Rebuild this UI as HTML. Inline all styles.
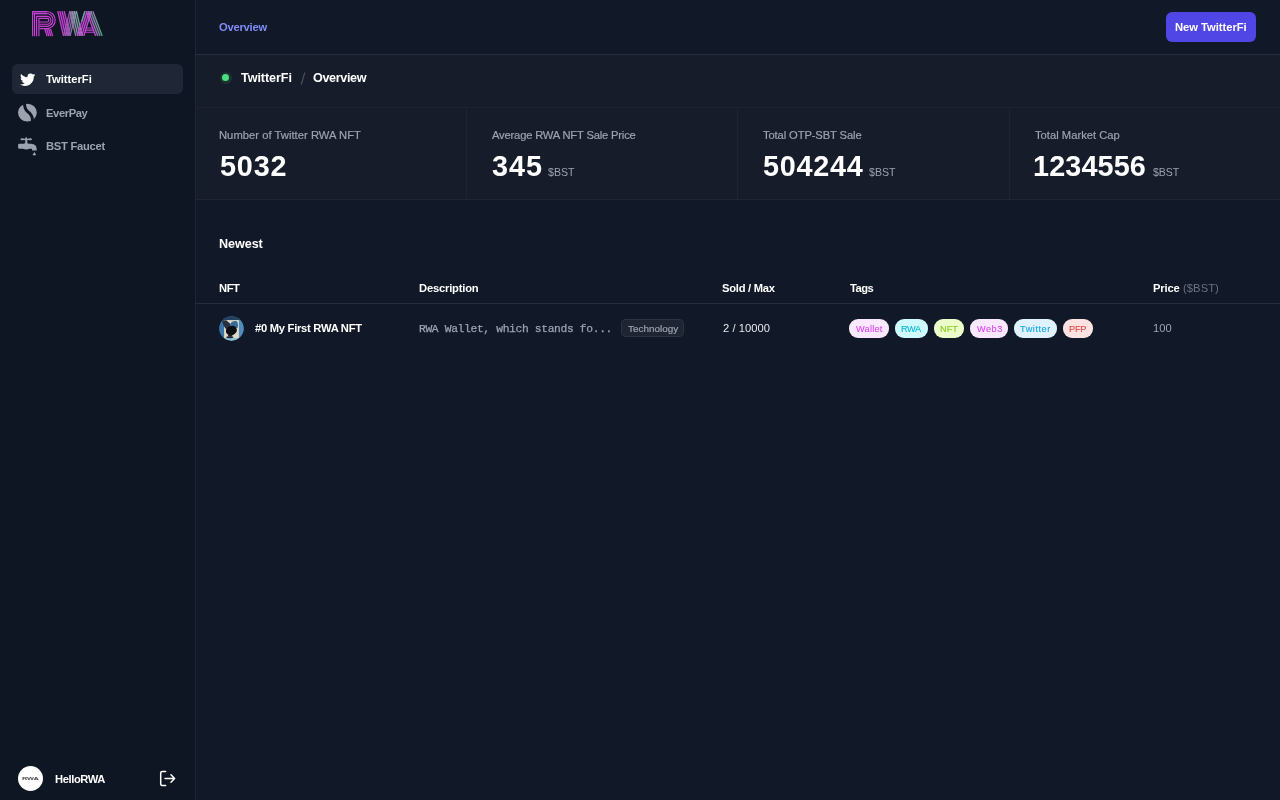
<!DOCTYPE html>
<html><head><meta charset="utf-8"><title>RWA TwitterFi</title>
<style>
html,body{margin:0;padding:0;width:1280px;height:800px;overflow:hidden;background:#111827;font-family:"Liberation Sans",sans-serif}
.t{position:absolute;white-space:nowrap;will-change:transform}
.abs{position:absolute}
#sidebar{position:absolute;left:0;top:0;width:195px;height:800px;background:#0f1623}
#sbline{position:absolute;left:195px;top:0;width:1px;height:800px;background:#1f2633}
#hdrline{position:absolute;left:195px;top:54px;width:1085px;height:1px;background:#282e3b}
#crumb{position:absolute;left:196px;top:55px;width:1084px;height:145px;background:#161c2a}
#statline{position:absolute;left:195px;top:107px;width:1085px;height:1px;background:#1c2230}
#statbot{position:absolute;left:195px;top:199px;width:1085px;height:1px;background:#1f2532}
.vdiv{position:absolute;top:108px;width:1px;height:91px;background:#1e2431}
#thline{position:absolute;left:195px;top:303px;width:1085px;height:1px;background:#272d3a}
#active{position:absolute;left:12px;top:63.8px;width:171px;height:30.7px;border-radius:6px;background:#1f2737}
#btn{position:absolute;left:1166px;top:12px;width:90px;height:30px;border-radius:6px;background:#4f46e5}
.pill{position:absolute;top:318.8px;height:18.8px;border-radius:9px;font:400 10.2px/18px "Liberation Sans",sans-serif;text-align:center;white-space:nowrap}
#tech{position:absolute;left:621.2px;top:318.9px;width:63.3px;height:18.6px;border-radius:5px;background:#1e2431;box-shadow:inset 0 0 0 1px #2c3340}
</style></head><body>
<div id="sidebar"></div>
<div id="sbline"></div>
<div id="hdrline"></div>
<div id="crumb"></div>
<div id="statline"></div>
<div id="statbot"></div>
<div class="vdiv" style="left:466px"></div>
<div class="vdiv" style="left:737px"></div>
<div class="vdiv" style="left:1009px"></div>
<div id="thline"></div>
<div id="active"></div>
<div id="btn"></div>
<div id="tech"></div>
<!-- status dot -->
<div class="abs" style="left:219.5px;top:71.5px;width:12px;height:12px;border-radius:6px;background:#1c342f"></div>
<div class="abs" style="left:222px;top:74px;width:7px;height:7px;border-radius:4px;background:#4ade80"></div>
<!-- breadcrumb slash -->
<svg class="abs" style="left:298px;top:71px" width="10" height="15" viewBox="0 0 10 15"><path d="M6.8 1.5 L3.2 13.5" stroke="#4b5563" stroke-width="1.1"/></svg>
<!-- pills -->
<div class="pill" style="left:849.1px;width:39.7px;background:#fae8ff;color:#d946ef"></div>
<div class="pill" style="left:894.9px;width:32.9px;background:#cffafe;color:#06b6d4"></div>
<div class="pill" style="left:933.8px;width:30.4px;background:#ecfccb;color:#65a30d"></div>
<div class="pill" style="left:970px;width:38px;background:#fae8ff;color:#d946ef"></div>
<div class="pill" style="left:1014.2px;width:42.8px;background:#e0f2fe;color:#0ea5e9"></div>
<div class="pill" style="left:1063.2px;width:29.8px;background:#fee2e2;color:#ef4444"></div>
<!-- logo -->
<svg class="abs" style="left:0;top:0" width="120" height="50" viewBox="0 0 120 50" fill="none">
<defs><linearGradient id="lgA" x1="0" y1="11" x2="0" y2="36" gradientUnits="userSpaceOnUse"><stop offset="0" stop-color="#9080a8"/><stop offset="0.5" stop-color="#70a8a0"/><stop offset="1" stop-color="#3fc070"/></linearGradient></defs>
<g stroke="#c83fd6" stroke-width="1.15">
<rect x="33.1" y="12.2" width="14" height="2.3" fill="#7d3290" stroke="none"/>
<path d="M32.6 36.2 V11.5 H46.65 A8.55 8.55 0 0 1 46.65 28.6 H39.4"/>
<path d="M34.5 36.2 V13.5 H46.55 A6.45 6.45 0 0 1 46.55 26.4 H39.4"/>
<path d="M36.6 36.2 V16.3 H46.95 A3.95 3.95 0 0 1 46.95 24.2 H39.4"/>
<path d="M38.9 36.2 V18.4 H47.00 A1.80 1.80 0 0 1 47.00 22.0 H39.4"/>
</g>
<path d="M44.30 29.0 L51.00 29.0 L53.30 36.2 L46.60 36.2 Z" fill="#c83fd6" fill-opacity="0.2" stroke="none"/>
<path d="M44.80 29.0 L47.10 36.2" stroke="#c83fd6" stroke-width="1.15"/>
<path d="M46.70 29.0 L49.00 36.2" stroke="#c83fd6" stroke-width="1.15"/>
<path d="M48.60 29.0 L50.90 36.2" stroke="#c83fd6" stroke-width="1.15"/>
<path d="M50.50 29.0 L52.80 36.2" stroke="#c83fd6" stroke-width="1.15"/>
<path d="M57.20 11.2 L64.80 11.2 L70.60 35.9 L63.00 35.9 Z" fill="#c840d6" fill-opacity="0.28" stroke="none"/>
<path d="M57.70 11.2 L63.50 35.9" stroke="#c840d6" stroke-width="1.15"/>
<path d="M59.90 11.2 L65.70 35.9" stroke="#c840d6" stroke-width="1.15"/>
<path d="M62.10 11.2 L67.90 35.9" stroke="#c840d6" stroke-width="1.15"/>
<path d="M64.30 11.2 L70.10 35.9" stroke="#c840d6" stroke-width="1.15"/>
<path d="M69.30 11.2 L76.90 11.2 L70.60 35.9 L63.00 35.9 Z" fill="#8a5aa8" fill-opacity="0.28" stroke="none"/>
<path d="M69.80 11.2 L63.50 35.9" stroke="#a852bc" stroke-width="1.15"/>
<path d="M72.00 11.2 L65.70 35.9" stroke="#9a62b0" stroke-width="1.15"/>
<path d="M74.20 11.2 L67.90 35.9" stroke="#9070ac" stroke-width="1.15"/>
<path d="M76.40 11.2 L70.10 35.9" stroke="#8880aa" stroke-width="1.15"/>
<path d="M69.30 11.2 L76.90 11.2 L82.80 35.9 L75.20 35.9 Z" fill="#80909c" fill-opacity="0.28" stroke="none"/>
<path d="M69.80 11.2 L75.70 35.9" stroke="#9480ac" stroke-width="1.15"/>
<path d="M72.00 11.2 L77.90 35.9" stroke="#8c98aa" stroke-width="1.15"/>
<path d="M74.20 11.2 L80.10 35.9" stroke="#84a4a8" stroke-width="1.15"/>
<path d="M76.40 11.2 L82.30 35.9" stroke="#78aca2" stroke-width="1.15"/>
<path d="M84.40 11.2 L92.00 11.2 L84.40 35.9 L76.80 35.9 Z" fill="#d048de" fill-opacity="0.28" stroke="none"/>
<path d="M84.90 11.2 L77.30 35.9" stroke="#c048d0" stroke-width="1.15"/>
<path d="M87.10 11.2 L79.50 35.9" stroke="#d048de" stroke-width="1.15"/>
<path d="M89.30 11.2 L81.70 35.9" stroke="#d048de" stroke-width="1.15"/>
<path d="M91.50 11.2 L83.90 35.9" stroke="#c058d0" stroke-width="1.15"/>
<path d="M84.9 11.2 L81.8 21.3" stroke="#48c07a" stroke-width="1.15"/>
<path d="M85.80 11.2 L93.40 11.2 L102.70 35.9 L95.10 35.9 Z" fill="#9070a8" fill-opacity="0.28" stroke="none"/>
<path d="M86.30 11.2 L95.60 35.9" stroke="#c050d2" stroke-width="1.15"/>
<path d="M88.50 11.2 L97.80 35.9" stroke="#a078b4" stroke-width="1.15"/>
<path d="M90.70 11.2 L100.00 35.9" stroke="#8a8aa8" stroke-width="1.15"/>
<path d="M92.90 11.2 L102.20 35.9" stroke="url(#lgA)" stroke-width="1.15"/>
<path d="M86.6 28.0 H93.3 M86.0 30.1 H93.9 M85.4 32.2 H94.5" stroke="#c83fd6" stroke-width="1.15"/>
</svg>
<!-- twitter bird sidebar -->
<svg class="abs" style="left:19.6px;top:71.8px" width="15.4" height="14.2" viewBox="0 0 24 22" fill="#fff"><path d="M23.953 4.57a10 10 0 01-2.825.775 4.958 4.958 0 002.163-2.723c-.951.555-2.005.959-3.127 1.184a4.92 4.92 0 00-8.384 4.482C7.69 8.095 4.067 6.13 1.64 3.162a4.822 4.822 0 00-.666 2.475c0 1.71.87 3.213 2.188 4.096a4.904 4.904 0 01-2.228-.616v.06a4.923 4.923 0 003.946 4.827 4.996 4.996 0 01-2.212.085 4.936 4.936 0 004.604 3.417 9.867 9.867 0 01-6.102 2.105c-.39 0-.779-.023-1.17-.067a13.995 13.995 0 007.557 2.209c9.053 0 13.998-7.496 13.998-13.985 0-.21 0-.42-.015-.63A9.935 9.935 0 0024 4.59z"/></svg>
<!-- everpay -->
<svg class="abs" style="left:0;top:95px" width="50" height="35" viewBox="0 95 50 35">
 <ellipse cx="27.4" cy="112.6" rx="9.4" ry="8.9" fill="#9ca3af"/>
 <path d="M24.5 102.5 C24.4 107, 25.0 109.4, 27.6 111.5 C30.4 113.6, 32.3 115.4, 32.3 119 L32.3 123" stroke="#0f1623" stroke-width="2.9" fill="none"/>
</svg>
<!-- faucet -->
<svg class="abs" style="left:0;top:130px" width="50" height="30" viewBox="0 130 50 30" fill="#9ca3af">
 <path d="M20.6 139.3 Q20.6 138.1 21.8 138.3 L25.2 138.7 Q25.4 136.9 26.2 136.9 Q27 136.9 27.2 138.7 L30.6 138.3 Q31.9 138.1 31.9 139.3 Q31.9 140.5 30.6 140.3 L27.2 140 L25.2 140 L21.8 140.3 Q20.6 140.5 20.6 139.3 Z"/>
 <rect x="25.2" y="139.8" width="2.1" height="4.2"/>
 <path d="M18.1 145 Q18.1 143.7 19.5 143.7 L23.6 143.7 Q26.2 142.4 28.8 143.7 L31 143.7 Q36.7 144 36.7 149.3 L36.7 150.4 L32.1 150.4 L32.1 149.4 Q32.1 148.7 31.4 148.7 L29.5 148.7 Q26.2 150.2 23 148.7 L19.5 148.7 Q18.1 148.7 18.1 147.4 Z"/>
 <path d="M34.4 152 L35.8 154.2 Q35.9 155.5 34.4 155.5 Q32.9 155.5 33 154.2 Z"/>
</svg>
<!-- nft avatar -->
<svg class="abs" style="left:219px;top:316px" width="25" height="25" viewBox="0 0 25 25">
 <defs><clipPath id="avc"><circle cx="12.5" cy="12.5" r="12.15"/></clipPath></defs>
 <g clip-path="url(#avc)">
  <rect width="25" height="25" fill="#3a78ad"/>
  <rect x="0" y="0" width="25" height="4.1" fill="#24425f"/>
  <rect x="19.9" y="4" width="5.1" height="18" fill="#4f8dbb"/>
  <rect x="0" y="4" width="5.1" height="18" fill="#3b74a5"/>
  <rect x="0" y="22" width="25" height="3" fill="#8cc3d8"/>
  <rect x="5.1" y="4.1" width="14.8" height="17.9" fill="#dfdac6"/>
  <path d="M3 4.6 L7.2 4.3 L11.6 8 L11.8 13.4 L7.2 13.2 C5.2 11.2, 3.6 8.2, 3 4.6 Z" fill="#28313f"/>
  <path d="M11.4 8.4 C11.8 5.8, 14.6 4.8, 16.8 5.1 C19 5.6, 19.3 8.8, 18.6 11.9 L11.5 12 Z" fill="#376b98"/>
  <ellipse cx="12.4" cy="14.6" rx="5.6" ry="4.7" transform="rotate(-20 12.4 14.6)" fill="#0c0f14"/>
  <rect x="9.1" y="18.4" width="4.1" height="2.3" fill="#1a1f27"/>
  <ellipse cx="10.8" cy="21.3" rx="3.6" ry="1" fill="#1e2a38"/>
 </g>
</svg>
<!-- user avatar -->
<div class="abs" style="left:18px;top:766px;width:25px;height:25px;border-radius:50%;background:#fff"></div>
<svg class="abs" style="left:18px;top:766px;will-change:transform" width="25" height="25" viewBox="0 0 25 25"><text x="3.9" y="14.2" textLength="17" lengthAdjust="spacingAndGlyphs" font-family="'Liberation Sans', sans-serif" font-weight="700" font-size="4.6" fill="#4a4a4a" transform="scale(1 0.85)" transform-origin="0 14.2">RWA</text></svg>
<!-- logout -->
<svg class="abs" style="left:150px;top:765px" width="30" height="26" viewBox="150 765 30 26" fill="none" stroke="#fff" stroke-width="1.5" stroke-linecap="round" stroke-linejoin="round">
 <path d="M165.6 771.6 H162.2 Q160.7 771.6 160.7 773.1 V784 Q160.7 785.5 162.2 785.5 H165.6"/>
 <path d="M165 778.5 H174.5 M171 774.8 L174.6 778.5 L171 782.2"/>
</svg>

<div class="t" id="t0" style="left:45.90px;top:73.64px;font:700 11.2px/11.2px 'Liberation Sans', sans-serif;color:#fff;letter-spacing:0.000px;">TwitterFi</div>
<div class="t" id="t1" style="left:45.50px;top:108.44px;font:700 11.2px/11.2px 'Liberation Sans', sans-serif;color:#9ca3af;letter-spacing:-0.400px;">EverPay</div>
<div class="t" id="t2" style="left:45.50px;top:140.74px;font:700 11.2px/11.2px 'Liberation Sans', sans-serif;color:#9ca3af;letter-spacing:-0.256px;">BST Faucet</div>
<div class="t" id="t3" style="left:54.90px;top:774.04px;font:700 11.2px/11.2px 'Liberation Sans', sans-serif;color:#fff;letter-spacing:-0.400px;">HelloRWA</div>
<div class="t" id="t4" style="left:219.20px;top:21.64px;font:700 11.2px/11.2px 'Liberation Sans', sans-serif;color:#818cf8;letter-spacing:-0.229px;">Overview</div>
<div class="t" id="t5" style="left:1175.20px;top:21.64px;font:700 11.2px/11.2px 'Liberation Sans', sans-serif;color:#fff;letter-spacing:-0.017px;">New TwitterFi</div>
<div class="t" id="t6" style="left:241.15px;top:72.25px;font:700 12.6px/12.6px 'Liberation Sans', sans-serif;color:#fff;letter-spacing:-0.075px;">TwitterFi</div>
<div class="t" id="t7" style="left:313.25px;top:72.25px;font:700 12.6px/12.6px 'Liberation Sans', sans-serif;color:#fff;letter-spacing:-0.357px;">Overview</div>
<div class="t" id="t8" style="left:218.85px;top:130.44px;font:400 11.2px/11.2px 'Liberation Sans', sans-serif;color:#9ca3af;letter-spacing:0.042px;-webkit-text-stroke:0.2px currentColor">Number of Twitter RWA NFT</div>
<div class="t" id="t9" style="left:491.50px;top:130.44px;font:400 11.2px/11.2px 'Liberation Sans', sans-serif;color:#9ca3af;letter-spacing:-0.176px;-webkit-text-stroke:0.2px currentColor">Average RWA NFT Sale Price</div>
<div class="t" id="t10" style="left:762.90px;top:130.44px;font:400 11.2px/11.2px 'Liberation Sans', sans-serif;color:#9ca3af;letter-spacing:-0.112px;-webkit-text-stroke:0.2px currentColor">Total OTP-SBT Sale</div>
<div class="t" id="t11" style="left:1034.55px;top:130.44px;font:400 11.2px/11.2px 'Liberation Sans', sans-serif;color:#9ca3af;letter-spacing:0.017px;-webkit-text-stroke:0.2px currentColor">Total Market Cap</div>
<div class="t" id="t12" style="left:219.70px;top:151.66px;font:700 28.8px/28.8px 'Liberation Sans', sans-serif;color:#fff;letter-spacing:0.800px;">5032</div>
<div class="t" id="t13" style="left:491.65px;top:151.66px;font:700 28.8px/28.8px 'Liberation Sans', sans-serif;color:#fff;letter-spacing:1.025px;">345</div>
<div class="t" id="t14" style="left:762.60px;top:151.66px;font:700 28.8px/28.8px 'Liberation Sans', sans-serif;color:#fff;letter-spacing:0.730px;">504244</div>
<div class="t" id="t15" style="left:1032.95px;top:151.66px;font:700 28.8px/28.8px 'Liberation Sans', sans-serif;color:#fff;letter-spacing:0.117px;">1234556</div>
<div class="t" id="t16" style="left:548.20px;top:166.64px;font:400 10.6px/10.6px 'Liberation Sans', sans-serif;color:#9ca3af;letter-spacing:0.017px;">$BST</div>
<div class="t" id="t17" style="left:869.20px;top:166.64px;font:400 10.6px/10.6px 'Liberation Sans', sans-serif;color:#9ca3af;letter-spacing:0.017px;">$BST</div>
<div class="t" id="t18" style="left:1152.60px;top:166.64px;font:400 10.6px/10.6px 'Liberation Sans', sans-serif;color:#9ca3af;letter-spacing:-0.100px;">$BST</div>
<div class="t" id="t19" style="left:218.80px;top:237.75px;font:700 12.6px/12.6px 'Liberation Sans', sans-serif;color:#fff;letter-spacing:-0.060px;">Newest</div>
<div class="t" id="t20" style="left:218.90px;top:283.34px;font:700 11.2px/11.2px 'Liberation Sans', sans-serif;color:#fff;letter-spacing:-0.450px;">NFT</div>
<div class="t" id="t21" style="left:419.30px;top:283.34px;font:700 11.2px/11.2px 'Liberation Sans', sans-serif;color:#fff;letter-spacing:-0.190px;">Description</div>
<div class="t" id="t22" style="left:722.40px;top:283.34px;font:700 11.2px/11.2px 'Liberation Sans', sans-serif;color:#fff;letter-spacing:-0.256px;">Sold / Max</div>
<div class="t" id="t23" style="left:849.70px;top:283.34px;font:700 11.2px/11.2px 'Liberation Sans', sans-serif;color:#fff;letter-spacing:-0.533px;">Tags</div>
<div class="t" id="t24" style="left:1153.20px;top:283.34px;font:700 11.2px/11.2px 'Liberation Sans', sans-serif;color:#fff;letter-spacing:-0.175px;">Price</div>
<div class="t" id="t25" style="left:1183.10px;top:283.34px;font:400 11.2px/11.2px 'Liberation Sans', sans-serif;color:#6b7280;letter-spacing:0.080px;">($BST)</div>
<div class="t" id="t26" style="left:255.40px;top:322.64px;font:700 11.2px/11.2px 'Liberation Sans', sans-serif;color:#fff;letter-spacing:-0.267px;">#0 My First RWA NFT</div>
<div class="t" id="t27" style="left:418.70px;top:323.96px;font:400 11.3px/11.3px 'Liberation Mono', monospace;color:#9ca3af;letter-spacing:-0.345px;-webkit-text-stroke:0.25px currentColor">RWA Wallet, which stands fo...</div>
<div class="t" id="t28" style="left:627.70px;top:324.23px;font:400 9.9px/9.9px 'Liberation Sans', sans-serif;color:#9ca3af;letter-spacing:0.033px;-webkit-text-stroke:0.2px currentColor">Technology</div>
<div class="t" id="t29" style="left:723.00px;top:322.74px;font:400 11.2px/11.2px 'Liberation Sans', sans-serif;color:#e5e7eb;letter-spacing:0.025px;">2 / 10000</div>
<div class="t" id="t30" style="left:1153.10px;top:323.44px;font:400 11.2px/11.2px 'Liberation Sans', sans-serif;color:#9ca3af;letter-spacing:0.000px;">100</div>
<div class="t" id="t31" style="left:855.90px;top:325.23px;font:400 9.2px/9.2px 'Liberation Sans', sans-serif;color:#d946ef;letter-spacing:0.240px;-webkit-text-stroke:0.1px currentColor">Wallet</div>
<div class="t" id="t32" style="left:900.70px;top:325.23px;font:400 9.2px/9.2px 'Liberation Sans', sans-serif;color:#06b6d4;letter-spacing:-0.350px;-webkit-text-stroke:0.1px currentColor">RWA</div>
<div class="t" id="t33" style="left:940.00px;top:325.23px;font:400 9.2px/9.2px 'Liberation Sans', sans-serif;color:#84cc16;letter-spacing:0.000px;-webkit-text-stroke:0.1px currentColor">NFT</div>
<div class="t" id="t34" style="left:976.60px;top:325.23px;font:400 9.2px/9.2px 'Liberation Sans', sans-serif;color:#d946ef;letter-spacing:0.500px;-webkit-text-stroke:0.1px currentColor">Web3</div>
<div class="t" id="t35" style="left:1020.30px;top:325.23px;font:400 9.2px/9.2px 'Liberation Sans', sans-serif;color:#0ea5e9;letter-spacing:0.533px;-webkit-text-stroke:0.1px currentColor">Twitter</div>
<div class="t" id="t36" style="left:1069.10px;top:325.23px;font:400 9.2px/9.2px 'Liberation Sans', sans-serif;color:#ef4444;letter-spacing:-0.200px;-webkit-text-stroke:0.1px currentColor">PFP</div>
</body></html>
